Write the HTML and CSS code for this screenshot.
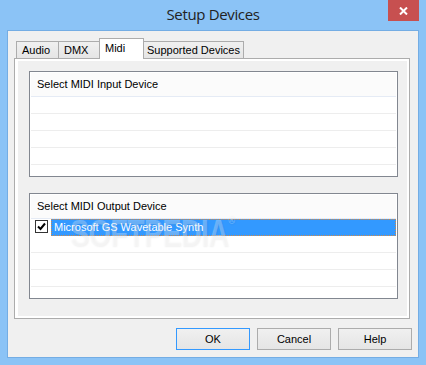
FILE: index.html
```html
<!DOCTYPE html>
<html lang="en">
  <head>
    <title>Setup Devices</title>
    <meta charset="UTF-8" />
    <link rel="stylesheet" href="styles.css">
  </head>
  <body>
    <div class="window">
      <div class="titlebar">
        <span class="title">Setup Devices</span>
        <button class="close" title="Close">
          <svg width="9" height="8" viewBox="0 0 9 8">
            <path d="M1 0.5 L8 7.5 M8 0.5 L1 7.5" stroke="#fff" stroke-width="2" fill="none" />
          </svg>
        </button>
      </div>

      <div class="client">
        <div class="tabs">
          <div class="tab tab-audio">Audio</div>
          <div class="tab tab-dmx">DMX</div>
          <div class="tab tab-midi active">Midi</div>
          <div class="tab tab-supported">Supported Devices</div>
        </div>

        <div class="panel">
          <div class="page">
            <div class="device-list">
              <div class="list-header">Select MIDI Input Device</div>
              <div class="row"></div>
              <div class="row"></div>
              <div class="row"></div>
              <div class="row"></div>
            </div>

            <div class="device-list">
              <div class="list-header">Select MIDI Output Device</div>
              <div class="row checked">
                <svg class="checkbox" width="13" height="13" viewBox="0 0 13 13">
                  <rect x="0.5" y="0.5" width="12" height="12" fill="#fff" stroke="#333" />
                  <path d="M3 6.5 L5.5 9 L10 3.5" stroke="#000" stroke-width="2" fill="none" />
                </svg>
                <span class="item selected">Microsoft GS Wavetable Synth</span>
              </div>
              <div class="row"></div>
              <div class="row"></div>
              <div class="row"></div>
              <div class="watermark">SOFTPEDIA<sup>®</sup></div>
            </div>
          </div>
        </div>

        <div class="buttons">
          <button class="btn default">OK</button>
          <button class="btn">Cancel</button>
          <button class="btn">Help</button>
        </div>
      </div>
    </div>
  </body>
</html>
```

FILE: styles.css
```css
* {
  margin: 0;
  padding: 0;
  box-sizing: border-box;
}

body {
  width: 426px;
  height: 365px;
  overflow: hidden;
  background: #8bc3f6;
  font-family: "Liberation Sans", Arial, sans-serif;
  font-size: 11px;
  color: #000;
}

.window {
  width: 426px;
  height: 365px;
  display: flex;
  flex-direction: column;
}

/* Title bar */
.titlebar {
  height: 30px;
  flex-shrink: 0;
  display: grid;
  grid-template-columns: 1fr auto 1fr;
  padding: 0 7px;
}

.title {
  grid-column: 2;
  font-family: "Open Sans", "Noto Sans", sans-serif;
  font-size: 15px;
  letter-spacing: -0.35px;
  line-height: 29px;
  color: #222;
}

.close {
  grid-column: 3;
  justify-self: end;
  align-self: start;
  width: 31px;
  height: 21px;
  border: none;
  background: #c75050;
  display: flex;
  justify-content: center;
  align-items: center;
  padding-top: 1px;
}

/* Client area */
.client {
  flex: 1;
  margin: 0 7px 7px;
  border: 1px solid #74ade4;
  background: #f0f0f0;
  display: flex;
  flex-direction: column;
}

.tabs {
  height: 27px;
  flex-shrink: 0;
  display: flex;
  align-items: flex-end;
  padding-left: 8px;
}

.tab {
  height: 17px;
  border: 1px solid #acacac;
  border-bottom: none;
  background: linear-gradient(#f0f0f0, #e5e5e5);
  padding-left: 5px;
  line-height: 16px;
  white-space: nowrap;
}

.tab-audio {
  width: 43px;
}

.tab-dmx {
  width: 44px;
  margin-left: -1px;
}

.tab-midi {
  width: 45px;
  margin-left: -3px;
}

.tab-supported {
  width: 103px;
  margin-left: -3px;
}

.tab.active {
  height: 21px;
  margin-bottom: -1px;
  padding-top: 1px;
  background: #fff;
  position: relative;
  z-index: 1;
}

.panel {
  height: 261px;
  flex-shrink: 0;
  margin: 0 8px 0 6px;
  border: 1px solid #acacac;
  background: #fff;
  padding: 2px 2px 2px 3px;
  display: flex;
}

.page {
  flex: 1;
  background: #f0f0f0;
  padding: 10px 9px 0 11px;
  display: flex;
  flex-direction: column;
  gap: 16px;
}

/* List views */
.device-list {
  position: relative;
  height: 106px;
  border: 1px solid #828790;
  background: #fff;
  padding: 1px;
  overflow: hidden;
}

.list-header {
  height: 24px;
  border-bottom: 1px solid #e5ebf5;
  background: #fbfbfb;
  padding-left: 6px;
  line-height: 23px;
}

.row {
  height: 17px;
  border-bottom: 1px solid #ededed;
}

.row.checked {
  border-bottom: none;
  display: flex;
  padding-left: 4px;
}

.checkbox {
  margin-top: 1px;
  flex-shrink: 0;
}

.item {
  flex: 1;
  margin-left: 3px;
  padding-left: 2px;
  line-height: 15px;
  white-space: nowrap;
}

.item.selected {
  background: #3399ff;
  color: #fff;
  border: 1px dotted #d08a4a;
}

.watermark {
  position: absolute;
  left: 40px;
  top: 19px;
  font-weight: bold;
  font-size: 37px;
  letter-spacing: -1px;
  transform: scaleX(0.78);
  transform-origin: left top;
  color: rgba(255, 255, 255, 0.28);
  text-shadow: 1px 1px 2px rgba(0, 0, 0, 0.06);
  pointer-events: none;
}

.watermark sup {
  font-size: 12px;
  vertical-align: top;
}

/* Buttons */
.buttons {
  display: flex;
  justify-content: flex-end;
  gap: 7px;
  margin-top: 9px;
  padding-right: 6px;
}

.btn {
  width: 74px;
  height: 22px;
  border: 1px solid #acacac;
  background: linear-gradient(#f0f0f0, #e5e5e5);
  font-family: "Liberation Sans", Arial, sans-serif;
  font-size: 11px;
  color: #000;
}

.btn.default {
  border-color: #3399ff;
}
```
